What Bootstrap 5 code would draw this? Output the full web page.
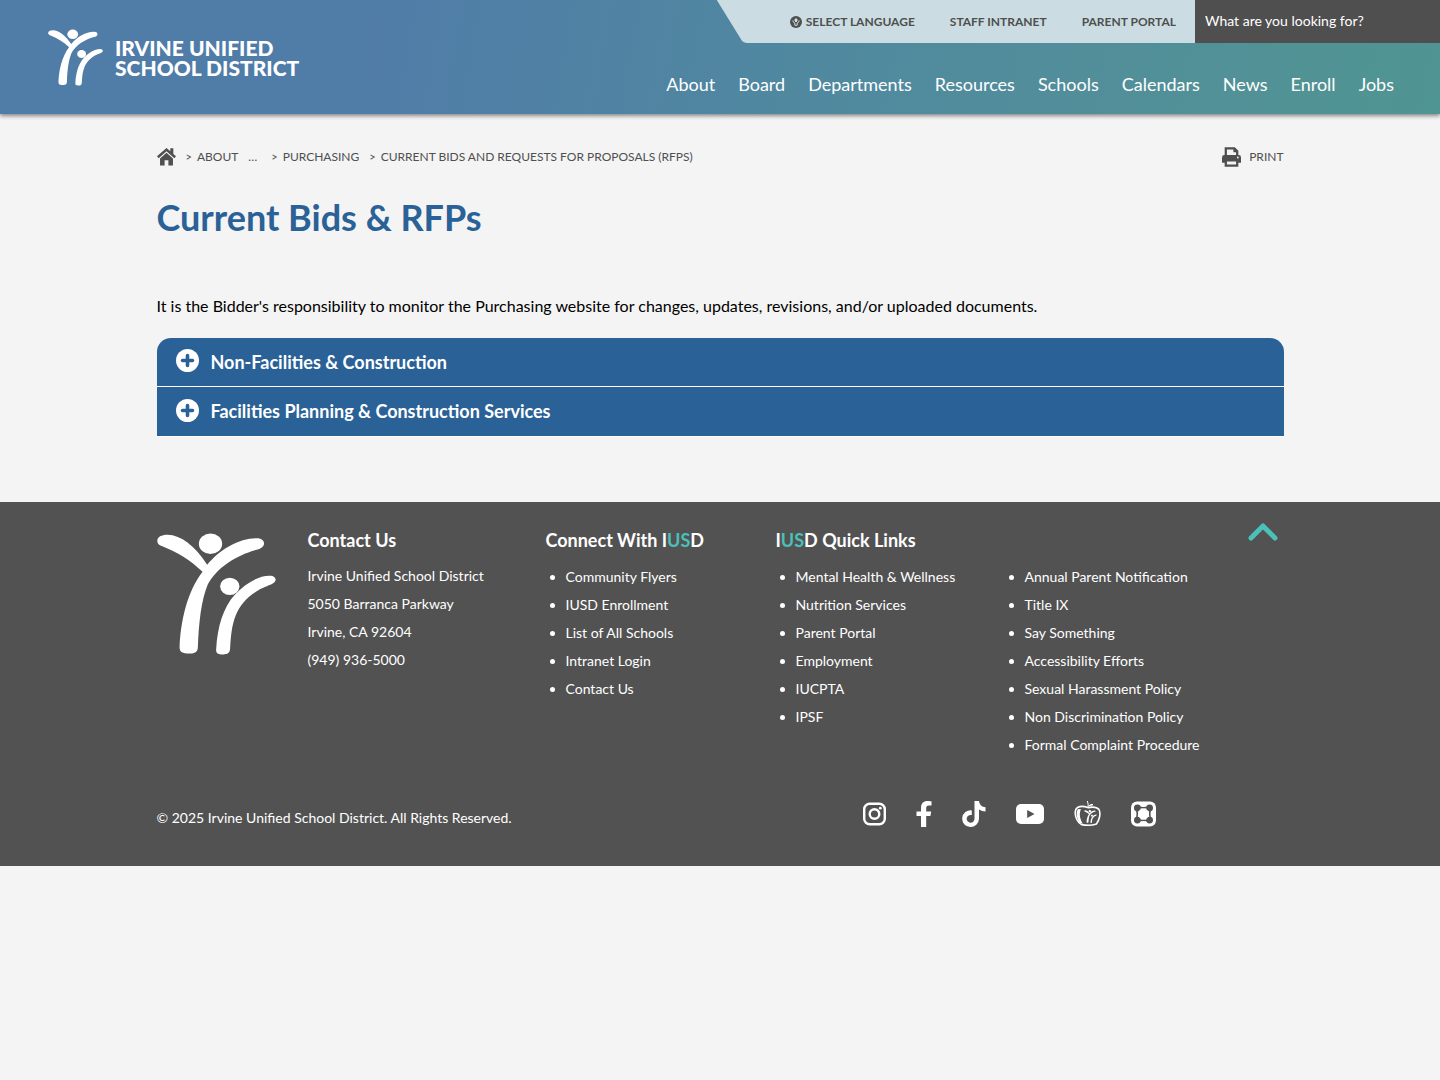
<!DOCTYPE html>
<html lang="en">
<head>
<meta charset="utf-8">
<meta name="viewport" content="width=device-width, initial-scale=1">
<title>Current Bids &amp; RFPs - Irvine Unified School District</title>
<link href="https://cdn.jsdelivr.net/npm/bootstrap@5.3.0/dist/css/bootstrap.min.css" rel="stylesheet">
<style>
  body { font-family: Lato, "Open Sans", sans-serif; font-size: 16px; background: #f4f4f4; color: #000; }
  a { text-decoration: none; color: inherit; }
  a:hover { text-decoration: underline; }
  .wrap { width: 100%; max-width: 1127px; margin: 0 auto; }

  .site-header { min-height: 114px; background: linear-gradient(100deg, #507ca8 0%, #507ca8 25%, #50899f 58%, #529197 85%, #4f9592 100%); box-shadow: 0 2px 4px rgba(0,0,0,.45); color: #fff; }
  .brand { padding: 29px 0 0 48px; gap: 12px; }
  .brand:hover { text-decoration: none; }
  .brand svg { width: 55px; height: 57px; }
  .brand-name { font-size: 21px; line-height: 20px; font-weight: 900; padding-top: 9px; }
  .utility { min-height: 43px; background: #cbdde2; color: #4f4f4f; font-size: 12px; font-weight: 700; gap: 35px; padding: 0 19px 0 73px; clip-path: polygon(0 0, 100% 0, 100% 100%, 30px 100%, 27px 98%, 25px 94%); }
  .utility svg { width: 12px; height: 12px; }
  .search-box { width: 245px; height: 43px; border: 0; border-radius: 0; background: #4f4f4f; color: #fff; font-size: 14px; padding: 0 10px 2px; outline-offset: -2px; }
  .search-box::placeholder { color: #fff; opacity: 1; }
  .main-nav { font-size: 18px; line-height: 28px; gap: 23px; padding: 27px 46px 0 0; }

  .crumb-row { padding-top: 31px; font-size: 12px; line-height: 24px; color: #4f4f4f; }
  .crumb-row nav { gap: 10px; }
  .crumb-row svg { margin-bottom: 1px; }
  .crumb-step { display: flex; gap: 5px; }
  .crumb-sep { font-size: 11px; }
  .page-title { font-size: 36px; line-height: 44px; font-weight: 700; color: #2a6197; margin: 26px 0 0; }
  .intro { margin: 55px 0 20px; line-height: 24px; }
  .panels { border-radius: 14px 14px 0 0; overflow: hidden; border-bottom: 1px solid #fff; }
  .panel-toggle { height: 48px; border: 0; background: #2a6197; color: #fff; font-size: 18px; font-weight: 700; padding: 0 19px; gap: 11px; }
  .panel-toggle + .panel-toggle { border-top: 1px solid #fff; height: 50px; }
  .panel-toggle svg { width: 24px; height: 24px; margin-bottom: 2px; }

  .site-footer { margin-top: 65px; background: #525252; color: #fff; font-size: 14px; line-height: 28px; padding: 20px 0 34px; }
  .foot-cols { display: grid; grid-template-columns: 151fr 238fr 230fr 229fr 279fr; }
  .foot-cols address { line-height: 28px; }
  .foot-logo { width: 119px; height: 122px; margin-top: 11px; }
  .foot-title { font-size: 18px; line-height: 24px; font-weight: 700; margin: 6px 0 10px; white-space: nowrap; }
  .foot-title span { color: #4ac0b8; }
  .foot-list { margin: 0; padding-left: 20px; padding-top: 1px; }
  .foot-last { padding-top: 40px; }
  .to-top { right: 6px; top: 0; line-height: 0; }
  .foot-base { padding-top: 37px; }
  .social { gap: 30px; padding-right: 128px; }
  .social svg { display: block; height: 28px; }
</style>
<script src="https://cdn.jsdelivr.net/npm/bootstrap@5.3.0/dist/js/bootstrap.bundle.min.js"></script>
</head>
<body>
<svg class="d-none" aria-hidden="true">
  <symbol id="figures" viewBox="50 70 358 366">
    <path d="M51 95C50 82 62 75 82 75C122 76 164 108 201 165C238 119 298 84 350 85C367 85 373 94 372 103C370 112 361 117 350 120C288 136 229 175 203 224C183 272 176 337 173 411C173 427 165 433 147 432C127 432 118 428 118 414C121 338 139 249 187 186C151 151 113 128 66 109C57 106 52 103 51 95Z"/>
    <ellipse cx="211" cy="102" rx="35" ry="31"/>
    <ellipse cx="269" cy="230" rx="29" ry="26"/>
    <path d="M228 419C232 350 249 294 284 255C315 222 354 198 388 198C402 198 407 204 407 211C405 220 394 224 382 229C337 246 302 278 287 317C274 350 272 383 270 415C270 431 262 435 249 435C233 435 227 431 228 419Z"/>
  </symbol>
  <symbol id="plus" viewBox="0 0 24 24">
    <circle cx="11.5" cy="11.5" r="11.5" fill="#fff"/>
    <path d="M11.5 6.5V16.5M6.5 11.5H16.5" stroke="#2a6197" stroke-width="3.6" stroke-linecap="round"/>
  </symbol>
</svg>

<header class="site-header d-flex justify-content-between position-relative">
  <a class="brand d-flex align-items-start" href="#">
    <svg fill="#fff" aria-hidden="true"><use href="#figures"/></svg>
    <span class="brand-name">IRVINE UNIFIED<br>SCHOOL DISTRICT</span>
  </a>
  <div class="d-flex flex-column align-items-end">
    <div class="d-flex">
      <div class="utility d-flex align-items-center">
        <a class="d-flex align-items-center gap-1" href="#">
          <svg viewBox="0 0 12 12" aria-hidden="true"><circle cx="6" cy="6" r="6" fill="#4f4f4f"/><path d="M6 2 8.4 4.4H7V6H5V4.4H3.6Z" fill="#cbdde2"/><path d="M2.8 4.6Q3 6.6 4.8 7V9.3H7.2V7Q9 6.6 9.2 4.6" fill="none" stroke="#cbdde2"/></svg>
          SELECT LANGUAGE</a>
        <a href="#">STAFF INTRANET</a>
        <a href="#">PARENT PORTAL</a>
      </div>
      <input class="search-box" type="search" placeholder="What are you looking for?" aria-label="Search">
    </div>
    <nav class="main-nav d-flex" aria-label="Main">
      <a href="#">About</a><a href="#">Board</a><a href="#">Departments</a><a href="#">Resources</a><a href="#">Schools</a><a href="#">Calendars</a><a href="#">News</a><a href="#">Enroll</a><a href="#">Jobs</a>
    </nav>
  </div>
</header>

<main class="wrap">
  <div class="crumb-row d-flex justify-content-between align-items-center">
    <nav class="d-flex align-items-center" aria-label="Breadcrumb">
      <a class="d-flex" href="#" aria-label="Home"><svg width="19" height="20" viewBox="0 0 20 20" fill="#4f4f4f"><path d="M10 0.5 0 9.3 1.7 11.2 10 4 18.3 11.2 20 9.3 17.2 6.8V0.8H14V4Z"/><path d="M10 5.6 3.2 11.6V19H8V13.5H12V19H16.8V11.6Z"/></svg></a>
      <span class="crumb-step"><span class="crumb-sep">&gt;</span><a href="#">ABOUT</a></span>
      <span class="pe-1">…</span>
      <span class="crumb-step"><span class="crumb-sep">&gt;</span><a href="#">PURCHASING</a></span>
      <span class="crumb-step"><span class="crumb-sep">&gt;</span><span>CURRENT BIDS AND REQUESTS FOR PROPOSALS (RFPS)</span></span>
    </nav>
    <a class="d-flex align-items-center gap-2" href="#">
      <svg width="19" height="22" viewBox="0 0 20 22"><path d="M4 10V2H13L16 5V10" fill="none" stroke="#4f4f4f" stroke-width="2.4"/><path d="M12 1V6H17Z" fill="#4f4f4f"/><path d="M2.5 9H17.5Q20 9 20 11.5V17H0V11.5Q0 9 2.5 9Z" fill="#4f4f4f"/><path d="M4 14.5H16V20H4Z" fill="#f4f4f4" stroke="#4f4f4f" stroke-width="2.4"/><circle cx="16.7" cy="11.5" r="1" fill="#f4f4f4"/></svg>
      PRINT</a>
  </div>
  <h1 class="page-title">Current Bids &amp; RFPs</h1>
  <p class="intro">It is the Bidder's responsibility to monitor the Purchasing website for changes, updates, revisions, and/or uploaded documents.</p>
  <div class="panels">
    <button class="panel-toggle d-flex align-items-center w-100" type="button" aria-expanded="false"><svg aria-hidden="true"><use href="#plus"/></svg>Non-Facilities &amp; Construction</button>
    <button class="panel-toggle d-flex align-items-center w-100" type="button" aria-expanded="false"><svg aria-hidden="true"><use href="#plus"/></svg>Facilities Planning &amp; Construction Services</button>
  </div>
</main>

<footer class="site-footer">
  <div class="wrap position-relative">
    <a class="to-top position-absolute" href="#" aria-label="Back to top"><svg width="30" height="20" viewBox="0 0 30 20" fill="none" stroke="#4ac0b8" stroke-width="5" stroke-linecap="round" stroke-linejoin="round"><path d="M3 16 15 4 27 16"/></svg></a>
    <div class="foot-cols">
      <div><svg class="foot-logo" fill="#fff" role="img" aria-label="Irvine Unified School District"><use href="#figures"/></svg></div>
      <div>
        <h2 class="foot-title">Contact Us</h2>
        <address class="mb-0">Irvine Unified School District<br>5050 Barranca Parkway<br>Irvine, CA 92604<br>(949) 936-5000</address>
      </div>
      <div>
        <h2 class="foot-title">Connect With I<span>US</span>D</h2>
        <ul class="foot-list"><li><a href="#">Community Flyers</a></li><li><a href="#">IUSD Enrollment</a></li><li><a href="#">List of All Schools</a></li><li><a href="#">Intranet Login</a></li><li><a href="#">Contact Us</a></li></ul>
      </div>
      <div>
        <h2 class="foot-title">I<span>US</span>D Quick Links</h2>
        <ul class="foot-list"><li><a href="#">Mental Health &amp; Wellness</a></li><li><a href="#">Nutrition Services</a></li><li><a href="#">Parent Portal</a></li><li><a href="#">Employment</a></li><li><a href="#">IUCPTA</a></li><li><a href="#">IPSF</a></li></ul>
      </div>
      <div class="foot-last">
        <ul class="foot-list"><li><a href="#">Annual Parent Notification</a></li><li><a href="#">Title IX</a></li><li><a href="#">Say Something</a></li><li><a href="#">Accessibility Efforts</a></li><li><a href="#">Sexual Harassment Policy</a></li><li><a href="#">Non Discrimination Policy</a></li><li><a href="#">Formal Complaint Procedure</a></li></ul>
      </div>
    </div>
    <div class="foot-base d-flex justify-content-between align-items-center">
      <span class="pt-2">© 2025 Irvine Unified School District. All Rights Reserved.</span>
      <div class="social d-flex align-items-center">
        <a href="#" aria-label="Instagram"><svg width="23" viewBox="0 0 23 28" fill="none" stroke="#fff" stroke-width="2.4"><rect x="1.2" y="3.7" width="20.6" height="20.6" rx="5.5"/><circle cx="11.5" cy="14" r="4.8"/><circle cx="17.3" cy="8.2" r="1.4" fill="#fff" stroke="none"/></svg></a>
        <a href="#" aria-label="Facebook"><svg width="16" viewBox="0 0 16 28" fill="#fff"><path d="M5 27V16H0.5V11.5H5V8C5 3.5 7.5 1 11.6 1C13.4 1 15.5 1.3 15.5 1.3V5.4H13C10.8 5.4 10.2 6.7 10.2 8V11.5H15.2L14.4 16H10.2V27Z"/></svg></a>
        <a href="#" aria-label="TikTok"><svg width="24" viewBox="0 0 24 28" fill="#fff"><path d="M23.5 11.6A11 11 0 0 1 17 9.5V18.8A8.4 8.4 0 1 1 9.8 10.4V15.1A3.9 3.9 0 1 0 12.5 18.8V1H17A6.4 6.4 0 0 0 23.5 7.2Z"/></svg></a>
        <a href="#" aria-label="YouTube"><svg width="28" viewBox="0 0 28 28"><rect y="4" width="28" height="20" rx="5" fill="#fff"/><path d="M11.2 10 18.5 14 11.2 18Z" fill="#525252"/></svg></a>
        <a href="#" aria-label="IUSD Apple"><svg width="27" viewBox="0 0 27 28"><path d="M3.5 7.5C8 5.2 11.5 6.8 14 7.6C18 6.8 23 7.2 25 9.5C27 13.5 25.4 20 22.4 24C18 25.6 12 25.4 7.5 24.6C3.5 22.5 1 17 1.2 12.5C1.4 10 2 8.4 3.5 7.5Z" fill="none" stroke="#fff" stroke-width="1.6"/><path d="M7 9.2C5 13 5.6 19 9 23.8L5.8 22.8C2.6 18.6 1.6 12.5 4 9Z" fill="#fff"/><path d="M14.2 7Q14.4 4 13.4 1M15 5.8Q17 3.6 19 4.6Q17.5 6.4 15 5.8" fill="none" stroke="#fff"/><use href="#figures" x="10" y="10" width="13" height="13" fill="#fff"/></svg></a>
        <a href="#" aria-label="ParentSquare"><svg width="25" viewBox="0 0 25 28"><rect y="1.5" width="25" height="25" rx="6" fill="#fff"/><g fill="#525252"><circle cx="6.4" cy="7.9" r="3.4"/><circle cx="18.6" cy="7.9" r="3.4"/><circle cx="6.4" cy="20.1" r="3.4"/><circle cx="18.6" cy="20.1" r="3.4"/></g><path d="M6.4 6.4Q12.5 9.2 18.6 6.4M6.4 21.6Q12.5 18.8 18.6 21.6M4.9 7.9Q7.7 14 4.9 20.1M20.1 7.9Q17.3 14 20.1 20.1" fill="none" stroke="#525252" stroke-width="1.6"/><circle cx="12.5" cy="14" r="5.4" fill="#fff"/></svg></a>
      </div>
    </div>
  </div>
</footer>
</body>
</html>
